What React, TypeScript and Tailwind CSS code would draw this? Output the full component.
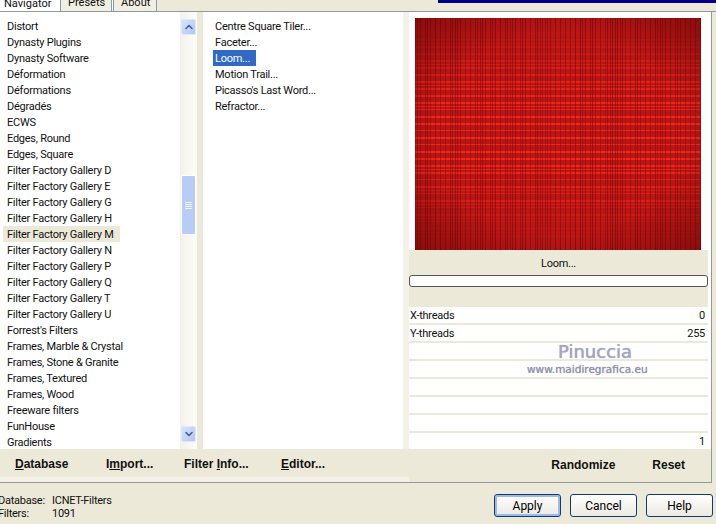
import React from 'react'
import { ChevronUp, ChevronDown } from 'lucide-react'

const filters = [
  'Distort', 'Dynasty Plugins', 'Dynasty Software', 'Déformation', 'Déformations', 'Dégradés', 'ECWS',
  'Edges, Round', 'Edges, Square', 'Filter Factory Gallery D', 'Filter Factory Gallery E',
  'Filter Factory Gallery G', 'Filter Factory Gallery H', 'Filter Factory Gallery M',
  'Filter Factory Gallery N', 'Filter Factory Gallery P', 'Filter Factory Gallery Q',
  'Filter Factory Gallery T', 'Filter Factory Gallery U', "Forrest's Filters",
  'Frames, Marble & Crystal', 'Frames, Stone & Granite', 'Frames, Textured', 'Frames, Wood',
  'Freeware filters', 'FunHouse', 'Gradients',
]

const effects = ['Centre Square Tiler...', 'Faceter...', 'Loom...', 'Motion Trail...', "Picasso's Last Word...", 'Refractor...']

// Repeatable stripe pattern for the preview
const noise = (i: number, seed: number) => {
  const v = Math.sin(i * 12.9898 + seed * 78.233) * 43758.5453
  return v - Math.floor(v)
}

function LoomPreview() {
  const w = 286
  const h = 232
  const cols = Array.from({ length: w }, (_, i) => i).filter((i) => i % 5 === 0 || (i % 5 === 2 && noise(i, 1) > 0.55))
  const rows = Array.from({ length: h }, (_, i) => i).filter((i) => i % 7 === 0 || (i % 7 === 1 && noise(i, 2) > 0.5) || (i % 7 === 4 && noise(i, 5) > 0.6))
  return (
    <svg width={w} height={h} className="block">
      <defs>
        <radialGradient id="shade" cx="0.5" cy="0.5" r="0.72">
          <stop offset="0" stopColor="#4a0000" stopOpacity="0" />
          <stop offset="0.6" stopColor="#4a0000" stopOpacity="0" />
          <stop offset="1" stopColor="#4a0000" stopOpacity="0.45" />
        </radialGradient>
        <linearGradient id="weft" x1="0" x2="0" y1="0" y2="1">
          <stop offset="0" stopColor="#7a0808" stopOpacity="0.8" />
          <stop offset="0.4" stopColor="#7a0808" stopOpacity="0.6" />
          <stop offset="0.6" stopColor="#7a0808" stopOpacity="0.6" />
          <stop offset="1" stopColor="#7a0808" stopOpacity="0.8" />
        </linearGradient>
      </defs>
      <rect width={w} height={h} fill="#ba1616" />
      {rows.map((y) => (
        <rect key={y} x="0" y={y} width={w} height="1" fill="#ff2a18" opacity={Math.pow(Math.sin((y / h) * Math.PI), 1.5) * 0.9} />
      ))}
      {cols.map((x) => (
        <rect key={x} x={x} y="0" width="1" height={h} fill="url(#weft)" opacity={noise(x, 4) * 0.3 + 0.6} />
      ))}
      <rect width={w} height={h} fill="url(#shade)" />
    </svg>
  )
}

function ScrollButton({ down }: { down?: boolean }) {
  return (
    <div className="w-[15px] h-[16px] flex items-center justify-center rounded-[2px] border border-[#dfe8fb] bg-gradient-to-br from-[#d8e3fb] to-[#b2c6f2] text-[#3d5a94]">
      {down ? <ChevronDown size={12} strokeWidth={3} /> : <ChevronUp size={12} strokeWidth={3} />}
    </div>
  )
}

function ActionButton({ label, active }: { label: string; active?: boolean }) {
  return (
    <div className={`w-[67px] h-[23px] flex items-center justify-center rounded-[3px] border border-[#0f3b73] bg-gradient-to-b from-white to-[#ece9e0] text-[12px] text-black ${active ? 'shadow-[inset_0_0_0_2px_#9db9e8]' : ''}`}>
      {label}
    </div>
  )
}

function Row({ label, value }: { label?: string; value?: string }) {
  return (
    <div className="h-[16px] bg-white flex justify-between px-[1px] text-[#111]">
      <span>{label}</span>
      <span className="pr-[2px]">{value}</span>
    </div>
  )
}

export default function App() {
  return (
    <div className="relative w-[716px] h-[524px] overflow-hidden flex flex-col bg-[#ece9d8] text-[11px] leading-[18px] tracking-[-0.25px] text-[#111] font-['Roboto',sans-serif]">
      {/* Background window peeking in above the dialog */}
      <div className="absolute left-[438px] top-0 w-[278px] h-[3px] bg-[#00008b]" />

      {/* Tabs */}
      <div className="h-[11px] flex items-end overflow-hidden border-b border-[#8f9a9a] shrink-0 box-content leading-[16px] tracking-normal">
        <div className="w-[60px] h-[16px] pl-[4px] bg-white -mb-[1px]">Navigator</div>
        <div className="w-[52px] h-[16px] pl-[7px] border-x border-[#7f9db9] bg-[#f1efe2]">Presets</div>
        <div className="w-[1px] h-[16px] bg-white" />
        <div className="w-[44px] h-[16px] pl-[7px] border-x border-[#7f9db9] bg-[#f1efe2]">About</div>
      </div>

      {/* Main panel */}
      <div className="w-[712px] h-[471px] flex flex-col border-r border-b border-[#8f9a9a] bg-white shrink-0">
        <div className="flex h-[437px]">
          {/* Category list */}
          <div className="w-[180px] pl-[3px] pt-[6px] shrink-0">
            {filters.map((name) => (
              <div key={name} className={`h-[16px] pl-[4px] whitespace-nowrap ${name === 'Filter Factory Gallery M' ? 'w-[117px] bg-[#ece9d8]' : ''}`}>
                {name}
              </div>
            ))}
          </div>

          {/* Scrollbar */}
          <div className="relative w-[17px] shrink-0 flex flex-col justify-between py-[7px] pl-[1px] bg-gradient-to-r from-[#f3f1ea] to-[#fdfdfb]">
            <ScrollButton />
            <ScrollButton down />
            <div className="absolute left-[1px] top-[163px] w-[15px] h-[60px] flex flex-col items-center justify-center gap-[1px] rounded-[2px] border border-white bg-[#b9ccf6]">
              <span className="w-[7px] h-[1px] bg-[#eef3fe]" />
              <span className="w-[7px] h-[1px] bg-[#eef3fe]" />
              <span className="w-[7px] h-[1px] bg-[#eef3fe]" />
              <span className="w-[7px] h-[1px] bg-[#eef3fe]" />
            </div>
          </div>
          <div className="w-[6px] shrink-0 bg-[#ece9d8]" />

          {/* Effect list */}
          <div className="w-[200px] pl-[10px] pt-[6px] shrink-0">
            {effects.map((name) => (
              <div key={name} className={`h-[16px] pl-[2px] whitespace-nowrap ${name === 'Loom...' ? 'w-[43px] bg-[#316ac5] text-white' : ''}`}>
                {name}
              </div>
            ))}
          </div>
          <div className="w-[6px] shrink-0 bg-[#f3f1e8]" />

          {/* Preview and sliders */}
          <div className="relative w-[299px] shrink-0 flex flex-col">
            <div className="h-[238px] pl-[6px] pt-[6px] shrink-0">
              <LoomPreview />
            </div>
            <div className="h-[57px] shrink-0 bg-[#ece9d8] pt-[5px] flex flex-col">
              <div className="h-[16px] text-center">Loom...</div>
              <div className="mt-[4px] h-[12px] rounded-[3px] border border-[#555] bg-white" />
            </div>
            <div className="flex flex-col gap-[2px] bg-[#ece9d8] pb-[2px]">
              <Row label="X-threads" value="0" />
              <Row label="Y-threads" value="255" />
              <Row />
              <Row />
              <Row />
              <Row />
              <Row />
              <Row value="1" />
            </div>
            <div className="absolute left-[149px] top-[329px] tracking-normal text-[#a5a5c4] text-[18px] font-['DejaVu_Sans',sans-serif] leading-[22px] [text-shadow:0_0_1px_#8f8fb4]">Pinuccia</div>
            <div className="absolute left-[118px] top-[350px] tracking-normal text-[#8f8fa8] text-[10.5px] font-['DejaVu_Sans',sans-serif] leading-[14px] [text-shadow:0_0_1px_#9a9ab0]">www.maidiregrafica.eu</div>
          </div>
        </div>

        {/* Toolbar row */}
        <div className="flex-1 flex">
          <div className="w-[409px] shrink-0 flex flex-col">
            <div className="h-[28px] bg-[#ece9d8] font-['Liberation_Sans',sans-serif] font-bold text-[12px] tracking-normal whitespace-nowrap flex items-center pl-[15px] pt-[2px]">
              <span className="w-[91px]"><u>D</u>atabase</span>
              <span className="w-[78px]">I<u>m</u>port...</span>
              <span className="w-[97px]">Filter <u>I</u>nfo...</span>
              <span><u>E</u>ditor...</span>
            </div>
            <div className="flex-1 bg-[#f3f1e8]" />
          </div>
          <div className="flex-1 bg-[#ece9d8] font-['Liberation_Sans',sans-serif] font-bold text-[12px] tracking-normal flex items-start justify-end pr-[26px] pt-[7px] gap-[37px]">
            <span>Randomize</span>
            <span>Reset</span>
          </div>
        </div>
      </div>

      {/* Status bar */}
      <div className="flex-1 flex">
        <div className="w-[496px] ml-[-2px] pt-[11px] leading-[13px] grid grid-cols-[54px_1fr] content-start">
          <span>Database:</span>
          <span>ICNET-Filters</span>
          <span>Filters:</span>
          <span>1091</span>
        </div>
        <div className="flex gap-[9px] pt-[11px] tracking-normal">
          <ActionButton label="Apply" active />
          <ActionButton label="Cancel" />
          <ActionButton label="Help" />
        </div>
      </div>
    </div>
  )
}
